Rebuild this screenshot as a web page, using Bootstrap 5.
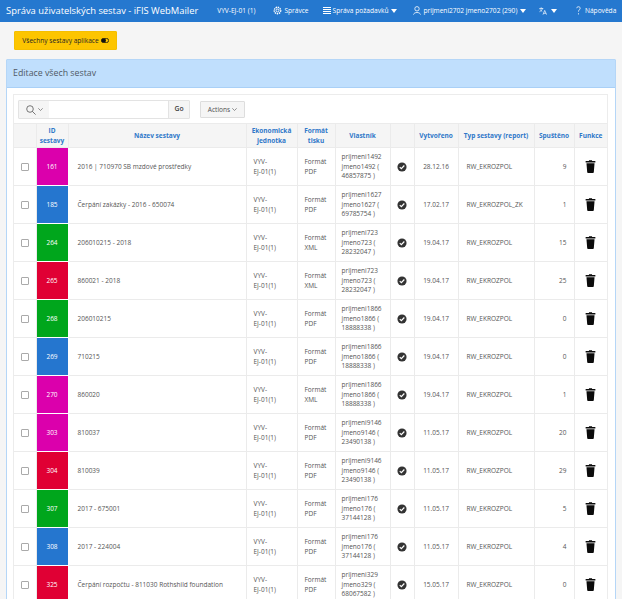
<!DOCTYPE html>
<html lang="cs">
<head>
<meta charset="utf-8">
<title>Správa uživatelských sestav</title>
<link href="https://cdn.jsdelivr.net/npm/bootstrap@5.3.0/dist/css/bootstrap.min.css" rel="stylesheet">
<style>
html,body{background:#f5f5f5;font-family:"Open Sans","Noto Sans",sans-serif;font-size:6.6px;color:#404040;overflow-x:hidden}
.topbar{background:#2578cf;height:22px;padding:0 6px;color:#fff;flex-wrap:nowrap;font-size:6.6px}
.topbar .brandname{font-size:9.4px;color:#fff;margin-right:19px;white-space:nowrap}
.topitem{color:#fff;white-space:nowrap;display:flex;align-items:center;gap:2px}
.topitem svg{display:block}
.gap-v{margin-left:18px}.gap-a{margin-left:14px}.gap-b{margin-left:16px}.gap-l{margin-left:13px}.gap-c{margin-left:19px;gap:4px}
.caretd{width:0;height:0;border:3px solid transparent;border-top:4px solid #fff;border-bottom:0;display:inline-block;margin-left:1px}
.allbtn{background:#fdc500;border:1px solid #f5bf00;border-radius:1px;height:19px;width:103px;margin:9px 0 9px 14px;padding:0;font-size:6.6px;color:#262626;display:flex;align-items:center;justify-content:center;gap:2px}
.editpanel{margin:0 6px;border:1px solid #b5d6f7;border-radius:1px;background:#fff}
.editpanel .card-header{background:#c0dffd;border:0;border-bottom:1px solid #a9d0f7;border-radius:0;height:28px;padding:0 6px;font-size:8.8px;color:#505a66;display:flex;align-items:center}
.editpanel .card-body{padding:6px 7px 0 6px}
.regionbox{border:1px solid #ececec;border-bottom:0;background:#fff}
.toolbox{height:28px;padding:5px 4px 4px;align-items:center;gap:5px}
.searchgroup{width:172px;height:19px;flex-wrap:nowrap;border:1px solid #e3e3e3;border-radius:1px}
.searchgroup .lensbtn{width:31px;background:#f5f5f5;border-right:1px solid #e3e3e3;display:flex;align-items:center;justify-content:center;gap:2px}
.searchgroup .txtbox{flex:1;border:0;min-width:0;background:#fff;outline:0}
.searchgroup .gobtn{width:21px;background:#f5f5f5;border:0;border-left:1px solid #e3e3e3;padding:0;font-size:6.8px;font-weight:600;color:#404040;border-radius:0}
.actionsbtn{width:45px;height:17px;margin-left:5px;background:#f5f5f5;border:1px solid #ddd;border-radius:1px;padding:0;font-size:6.6px;color:#505050;display:flex;align-items:center;justify-content:center;gap:2px}
.reptable{table-layout:fixed;width:593px;margin:0;border-collapse:collapse;font-size:6.5px;--bs-table-color:#555}
.reptable th,.reptable td{border:1px solid #ebebeb;padding:0 4px;vertical-align:middle}
.reptable tr>:first-child{border-left:0}.reptable tr>:last-child{border-right:0}
.reptable thead th{height:24px;background:#f5f5f5;color:#2f78c9;font-weight:700;text-align:center;line-height:9.5px;font-size:6.5px;padding:0 1px}
.reptable tbody td{height:38px;line-height:9.5px}
.c1{width:22px}.c2{width:32px}.c3{width:178px}.c4{width:51px}.c5{width:38px}.c6{width:55px}.c7{width:24px}.c8{width:44px}.c9{width:76px}.c10{width:40px}.c11{width:33px}
.reptable .rowchk{width:8px;height:8px;margin:0 auto;display:block;border-color:#aaa;border-radius:1px;float:none}
.reptable td.idcell{color:#fff;text-align:center;padding:0;border:1px solid #fff}
.idm{--bs-table-bg:#db00ac;background:#db00ac}.idb{--bs-table-bg:#2576cf;background:#2576cf}.idg{--bs-table-bg:#00a61c;background:#00a61c}.idr{--bs-table-bg:#e00034;background:#e00034}
.reptable .namecell{padding-left:9px}
.reptable .ejcell{padding:0 8px 0 7px}
.reptable .fmtcell{padding-left:7px}
.reptable .ownercell{padding-left:6px}
.iconcell,.datecell,.delcell{text-align:center}
.iconcell svg,.delcell svg{display:block;margin:0 auto}
.reptable .typecell{padding-left:8px}
.reptable .numcell{text-align:right;padding-right:7px}
</style>
</head>
<body>
<svg width="0" height="0" class="position-absolute">
<symbol id="okcirc" viewBox="0 0 12 12"><circle cx="6" cy="6" r="5.5" fill="#333"/><path d="M3.3 6.2 5.2 8 8.8 4.2" fill="none" stroke="#fff" stroke-width="1.4"/></symbol>
<symbol id="trash" viewBox="0 0 12 14"><path d="M4.3 1V.3h3.4V1H11.3v1.6H.7V1z M1.6 3.4h8.8L9.6 13.2q-.1.8-.9.8H3.3q-.8 0-.9-.8z" fill="#0b0b0b"/></symbol>
</svg>

<nav class="navbar topbar d-flex justify-content-start">
  <span class="brandname">Správa uživatelských sestav - iFIS WebMailer</span>
  <span class="topitem">VYV-EJ-01 (1)</span>
  <span class="topitem gap-v"><svg width="9" height="9" viewBox="0 0 10 10"><circle cx="5" cy="5" r="1.6" fill="none" stroke="#fff"/><circle cx="5" cy="5" r="3.6" fill="none" stroke="#fff" stroke-width="1.5" stroke-dasharray="1.6 .8"/></svg>Správce</span>
  <span class="topitem gap-a"><svg width="8" height="7" viewBox="0 0 8 7"><path d="M0 .5h8M0 2.5h8M0 4.5h8M0 6.5h8" stroke="#fff"/></svg>Správa požadavků<i class="caretd"></i></span>
  <span class="topitem gap-b"><svg width="8" height="9" viewBox="0 0 8 9"><circle cx="4" cy="2.8" r="2.2" fill="none" stroke="#fff" stroke-width=".8"/><path d="M.5 8.6C1 5.8 7 5.8 7.5 8.6" fill="none" stroke="#fff" stroke-width=".8"/></svg>prijmeni2702 jmeno2702 (290)<i class="caretd"></i></span>
  <span class="topitem gap-l"><svg width="8" height="8" viewBox="0 0 8 8"><path d="M.3 1.5h4M2.2.3v1.2M3.5 1.5C3 3 1.8 4 .5 4.7M1.2 2.4c.4 1 1.2 1.6 2 2M4 7.6 5.7 3.4 7.6 7.6M4.7 6.3h2.2" fill="none" stroke="#fff" stroke-width=".7"/></svg><i class="caretd ms-1"></i></span>
  <span class="topitem gap-c"><svg width="5" height="9" viewBox="0 0 5 9"><path d="M.7 2.2C.8.2 4.3.3 4.2 2.3 4.1 3.7 2.5 3.8 2.5 5.6" fill="none" stroke="#fff" stroke-width=".8"/><circle cx="2.5" cy="7.8" r=".6" fill="#fff"/></svg>Nápověda</span>
</nav>

<button type="button" class="btn allbtn">Všechny sestavy aplikace <svg width="8" height="5" viewBox="0 0 8 5"><rect x=".4" y=".4" width="7.2" height="4.2" rx="2.1" fill="none" stroke="#111" stroke-width=".8"/><rect x=".4" y=".4" width="4.6" height="4.2" rx="2.1" fill="#111"/></svg></button>

<div class="card editpanel">
  <div class="card-header">Editace všech sestav</div>
  <div class="card-body">
    <div class="regionbox">
      <div class="d-flex toolbox">
        <div class="input-group searchgroup">
          <span class="lensbtn"><svg width="10" height="10" viewBox="0 0 10 10"><circle cx="4" cy="4" r="3.3" fill="none" stroke="#555" stroke-width=".8"/><path d="M6.4 6.4 9.6 9.6" stroke="#555" stroke-width=".8"/></svg><svg width="5" height="3" viewBox="0 0 5 3"><path d="M.3.3 2.5 2.5 4.7.3" fill="none" stroke="#666" stroke-width=".7"/></svg></span>
          <input class="txtbox" type="text" aria-label="Hledat">
          <button type="button" class="btn gobtn">Go</button>
        </div>
        <button type="button" class="btn actionsbtn">Actions <svg width="5" height="3" viewBox="0 0 5 3"><path d="M.3.3 2.5 2.5 4.7.3" fill="none" stroke="#666" stroke-width=".7"/></svg></button>
      </div>
      <table class="table reptable">
        <colgroup><col class="c1"><col class="c2"><col class="c3"><col class="c4"><col class="c5"><col class="c6"><col class="c7"><col class="c8"><col class="c9"><col class="c10"><col class="c11"></colgroup>
        <thead><tr><th></th><th>ID sestavy</th><th>Název sestavy</th><th>Ekonomická jednotka</th><th>Formát tisku</th><th>Vlastník</th><th></th><th>Vytvořeno</th><th>Typ sestavy (report)</th><th>Spuštěno</th><th>Funkce</th></tr></thead>
        <tbody>
<tr><td><input class="form-check-input rowchk" type="checkbox"></td><td class="idcell idm">161</td><td class="namecell">2016 | 710970 SB mzdové prostředky</td><td class="ejcell">VYV- <span class="text-nowrap">EJ-01(1)</span></td><td class="fmtcell">Formát PDF</td><td class="ownercell">prijmeni1492 jmeno1492 ( 46857875 )</td><td class="iconcell"><svg width="10" height="10"><use href="#okcirc"/></svg></td><td class="datecell">28.12.16</td><td class="typecell">RW_EKROZPOL</td><td class="numcell">9</td><td class="delcell"><svg width="11" height="13"><use href="#trash"/></svg></td></tr>
<tr><td><input class="form-check-input rowchk" type="checkbox"></td><td class="idcell idb">185</td><td class="namecell">Čerpání zakázky - 2016 - 650074</td><td class="ejcell">VYV- <span class="text-nowrap">EJ-01(1)</span></td><td class="fmtcell">Formát PDF</td><td class="ownercell">prijmeni1627 jmeno1627 ( 69785754 )</td><td class="iconcell"><svg width="10" height="10"><use href="#okcirc"/></svg></td><td class="datecell">17.02.17</td><td class="typecell">RW_EKROZPOL_ZK</td><td class="numcell">1</td><td class="delcell"><svg width="11" height="13"><use href="#trash"/></svg></td></tr>
<tr><td><input class="form-check-input rowchk" type="checkbox"></td><td class="idcell idg">264</td><td class="namecell">206010215 - 2018</td><td class="ejcell">VYV- <span class="text-nowrap">EJ-01(1)</span></td><td class="fmtcell">Formát XML</td><td class="ownercell">prijmeni723 jmeno723 ( 28232047 )</td><td class="iconcell"><svg width="10" height="10"><use href="#okcirc"/></svg></td><td class="datecell">19.04.17</td><td class="typecell">RW_EKROZPOL</td><td class="numcell">15</td><td class="delcell"><svg width="11" height="13"><use href="#trash"/></svg></td></tr>
<tr><td><input class="form-check-input rowchk" type="checkbox"></td><td class="idcell idr">265</td><td class="namecell">860021 - 2018</td><td class="ejcell">VYV- <span class="text-nowrap">EJ-01(1)</span></td><td class="fmtcell">Formát XML</td><td class="ownercell">prijmeni723 jmeno723 ( 28232047 )</td><td class="iconcell"><svg width="10" height="10"><use href="#okcirc"/></svg></td><td class="datecell">19.04.17</td><td class="typecell">RW_EKROZPOL</td><td class="numcell">25</td><td class="delcell"><svg width="11" height="13"><use href="#trash"/></svg></td></tr>
<tr><td><input class="form-check-input rowchk" type="checkbox"></td><td class="idcell idg">268</td><td class="namecell">206010215</td><td class="ejcell">VYV- <span class="text-nowrap">EJ-01(1)</span></td><td class="fmtcell">Formát PDF</td><td class="ownercell">prijmeni1866 jmeno1866 ( 18888338 )</td><td class="iconcell"><svg width="10" height="10"><use href="#okcirc"/></svg></td><td class="datecell">19.04.17</td><td class="typecell">RW_EKROZPOL</td><td class="numcell">0</td><td class="delcell"><svg width="11" height="13"><use href="#trash"/></svg></td></tr>
<tr><td><input class="form-check-input rowchk" type="checkbox"></td><td class="idcell idb">269</td><td class="namecell">710215</td><td class="ejcell">VYV- <span class="text-nowrap">EJ-01(1)</span></td><td class="fmtcell">Formát PDF</td><td class="ownercell">prijmeni1866 jmeno1866 ( 18888338 )</td><td class="iconcell"><svg width="10" height="10"><use href="#okcirc"/></svg></td><td class="datecell">19.04.17</td><td class="typecell">RW_EKROZPOL</td><td class="numcell">0</td><td class="delcell"><svg width="11" height="13"><use href="#trash"/></svg></td></tr>
<tr><td><input class="form-check-input rowchk" type="checkbox"></td><td class="idcell idm">270</td><td class="namecell">860020</td><td class="ejcell">VYV- <span class="text-nowrap">EJ-01(1)</span></td><td class="fmtcell">Formát XML</td><td class="ownercell">prijmeni1866 jmeno1866 ( 18888338 )</td><td class="iconcell"><svg width="10" height="10"><use href="#okcirc"/></svg></td><td class="datecell">19.04.17</td><td class="typecell">RW_EKROZPOL</td><td class="numcell">1</td><td class="delcell"><svg width="11" height="13"><use href="#trash"/></svg></td></tr>
<tr><td><input class="form-check-input rowchk" type="checkbox"></td><td class="idcell idm">303</td><td class="namecell">810037</td><td class="ejcell">VYV- <span class="text-nowrap">EJ-01(1)</span></td><td class="fmtcell">Formát PDF</td><td class="ownercell">prijmeni9146 jmeno9146 ( 23490138 )</td><td class="iconcell"><svg width="10" height="10"><use href="#okcirc"/></svg></td><td class="datecell">11.05.17</td><td class="typecell">RW_EKROZPOL</td><td class="numcell">20</td><td class="delcell"><svg width="11" height="13"><use href="#trash"/></svg></td></tr>
<tr><td><input class="form-check-input rowchk" type="checkbox"></td><td class="idcell idr">304</td><td class="namecell">810039</td><td class="ejcell">VYV- <span class="text-nowrap">EJ-01(1)</span></td><td class="fmtcell">Formát PDF</td><td class="ownercell">prijmeni9146 jmeno9146 ( 23490138 )</td><td class="iconcell"><svg width="10" height="10"><use href="#okcirc"/></svg></td><td class="datecell">11.05.17</td><td class="typecell">RW_EKROZPOL</td><td class="numcell">29</td><td class="delcell"><svg width="11" height="13"><use href="#trash"/></svg></td></tr>
<tr><td><input class="form-check-input rowchk" type="checkbox"></td><td class="idcell idg">307</td><td class="namecell">2017 - 675001</td><td class="ejcell">VYV- <span class="text-nowrap">EJ-01(1)</span></td><td class="fmtcell">Formát PDF</td><td class="ownercell">prijmeni176 jmeno176 ( 37144128 )</td><td class="iconcell"><svg width="10" height="10"><use href="#okcirc"/></svg></td><td class="datecell">11.05.17</td><td class="typecell">RW_EKROZPOL</td><td class="numcell">5</td><td class="delcell"><svg width="11" height="13"><use href="#trash"/></svg></td></tr>
<tr><td><input class="form-check-input rowchk" type="checkbox"></td><td class="idcell idb">308</td><td class="namecell">2017 - 224004</td><td class="ejcell">VYV- <span class="text-nowrap">EJ-01(1)</span></td><td class="fmtcell">Formát PDF</td><td class="ownercell">prijmeni176 jmeno176 ( 37144128 )</td><td class="iconcell"><svg width="10" height="10"><use href="#okcirc"/></svg></td><td class="datecell">11.05.17</td><td class="typecell">RW_EKROZPOL</td><td class="numcell">4</td><td class="delcell"><svg width="11" height="13"><use href="#trash"/></svg></td></tr>
<tr><td><input class="form-check-input rowchk" type="checkbox"></td><td class="idcell idr">325</td><td class="namecell">Čerpání rozpočtu - 811030 Rothshild foundation</td><td class="ejcell">VYV- <span class="text-nowrap">EJ-01(1)</span></td><td class="fmtcell">Formát PDF</td><td class="ownercell">prijmeni329 jmeno329 ( 68067582 )</td><td class="iconcell"><svg width="10" height="10"><use href="#okcirc"/></svg></td><td class="datecell">15.05.17</td><td class="typecell">RW_EKROZPOL</td><td class="numcell">0</td><td class="delcell"><svg width="11" height="13"><use href="#trash"/></svg></td></tr>
        </tbody>
      </table>
    </div>
  </div>
</div>
<script src="https://cdn.jsdelivr.net/npm/bootstrap@5.3.0/dist/js/bootstrap.bundle.min.js"></script>
</body>
</html>
